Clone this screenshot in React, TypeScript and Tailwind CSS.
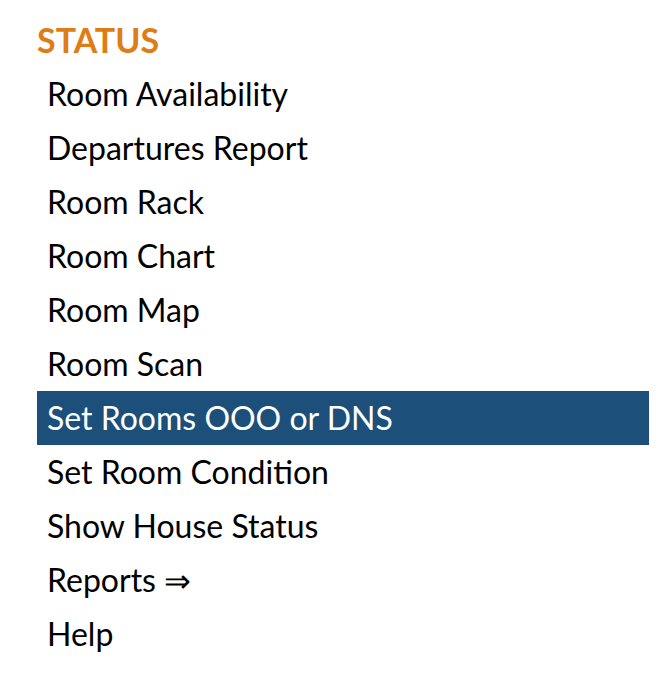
export default function App() {
  const items = [
    "Room Availability",
    "Departures Report",
    "Room Rack",
    "Room Chart",
    "Room Map",
    "Room Scan",
    "Set Rooms OOO or DNS",
    "Set Room Condition",
    "Show House Status",
    "Reports \u21D2",
    "Help",
  ];
  return (
    <div className="min-h-screen bg-white pl-[37px] pr-[12px] pt-[20px]" style={{ fontFamily: "Lato, 'Noto Sans', sans-serif" }}>
      <div className="text-[34px] font-bold leading-[40px] text-[#e07c14] mb-[7px]">STATUS</div>
      <ul>
        {items.map((t) => {
          const active = t === "Set Rooms OOO or DNS";
          return (
            <li
              key={t}
              className={
                "h-[54px] pl-[10px] text-[32px] leading-[54px] " +
                (active ? "bg-[#1c4f7a] text-white" : "text-black")
              }
            >
              {t}
            </li>
          );
        })}
      </ul>
    </div>
  );
}
